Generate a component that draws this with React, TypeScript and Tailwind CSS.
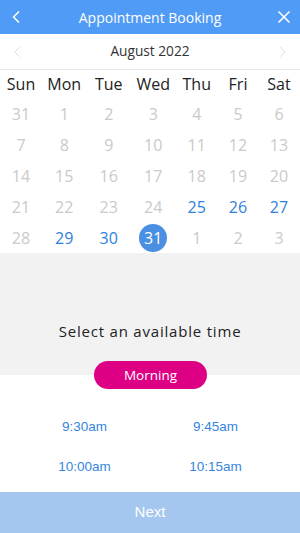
import { ChevronLeft, ChevronRight, X } from 'lucide-react';

type Day = { n: number; state: 'off' | 'open' | 'selected' };

const openDays = [25, 26, 27, 29, 30];

// August 2022 grid, starting on Sun 31 Jul
const buildDays = (): Day[] => {
  const days: Day[] = [{ n: 31, state: 'off' }];
  for (let i = 1; i <= 31; i++) {
    days.push({ n: i, state: i === 31 ? 'selected' : openDays.includes(i) ? 'open' : 'off' });
  }
  for (let i = 1; i <= 3; i++) days.push({ n: i, state: 'off' });
  return days;
};

const weekdays = ['Sun', 'Mon', 'Tue', 'Wed', 'Thu', 'Fri', 'Sat'];
const times = ['9:30am', '9:45am', '10:00am', '10:15am'];

export default function App() {
  const days = buildDays();

  return (
    <div className="w-[300px] h-[533px] flex flex-col bg-white overflow-hidden font-['Open_Sans',sans-serif]">
      {/* Header */}
      <div className="h-[34px] shrink-0 bg-[#509bf6] flex items-center justify-between px-[6px] text-white">
        <ChevronLeft size={20} strokeWidth={2} />
        <span className="text-[14px]">Appointment Booking</span>
        <X size={20} strokeWidth={2} />
      </div>

      {/* Month nav */}
      <div className="h-[36px] shrink-0 flex items-center justify-between px-[8px] border-b border-[#e8e8e8]">
        <ChevronLeft size={18} strokeWidth={1} className="text-[#cfcfcf]" />
        <span className="text-[13.7px] text-[#333]">August 2022</span>
        <ChevronRight size={18} strokeWidth={1} className="text-[#cfcfcf]" />
      </div>

      {/* Calendar */}
      <div className="shrink-0 grid grid-cols-[42px_44.5px_44.5px_44.5px_42.5px_40px_42px]">
        {weekdays.map((w) => (
          <div key={w} className="h-[28px] flex items-center justify-center text-[16px] text-[#222]">
            {w}
          </div>
        ))}
        {days.map((d, i) => (
          <div key={i} className="h-[31px] flex items-center justify-center">
            {d.state === 'selected' ? (
              <span className="w-[28px] h-[28px] rounded-full bg-[#4a8fe2] text-white text-[16px] flex items-center justify-center">
                {d.n}
              </span>
            ) : (
              <span className={`text-[16px] ${d.state === 'open' ? 'text-[#2f80dc]' : 'text-[#cacaca]'}`}>{d.n}</span>
            )}
          </div>
        ))}
      </div>

      {/* Time section */}
      <div className="shrink-0 bg-[#f2f2f2] h-[122px] flex flex-col items-center pt-[67px] relative">
        <span className="text-[15px] tracking-[0.8px] text-[#222]">Select an available time</span>
        <div className="absolute left-[94px] top-[108px] w-[113px] h-[28px] rounded-full bg-[#de0084] text-white text-[13.5px] font-medium flex items-center justify-center">
          Morning
        </div>
      </div>

      <div className="flex-1 grid grid-cols-2 content-start px-[19px] pt-[32px] font-['Liberation_Sans',Arial,sans-serif]">
        {times.map((t) => (
          <div key={t} className="h-[40px] flex items-center justify-center text-[13.5px] text-[#3586e0]">
            {t}
          </div>
        ))}
      </div>

      <div className="h-[41px] shrink-0 bg-[#a4c6ef] flex items-center justify-center text-white text-[15px] font-['Liberation_Sans',Arial,sans-serif]">
        Next
      </div>
    </div>
  );
}
